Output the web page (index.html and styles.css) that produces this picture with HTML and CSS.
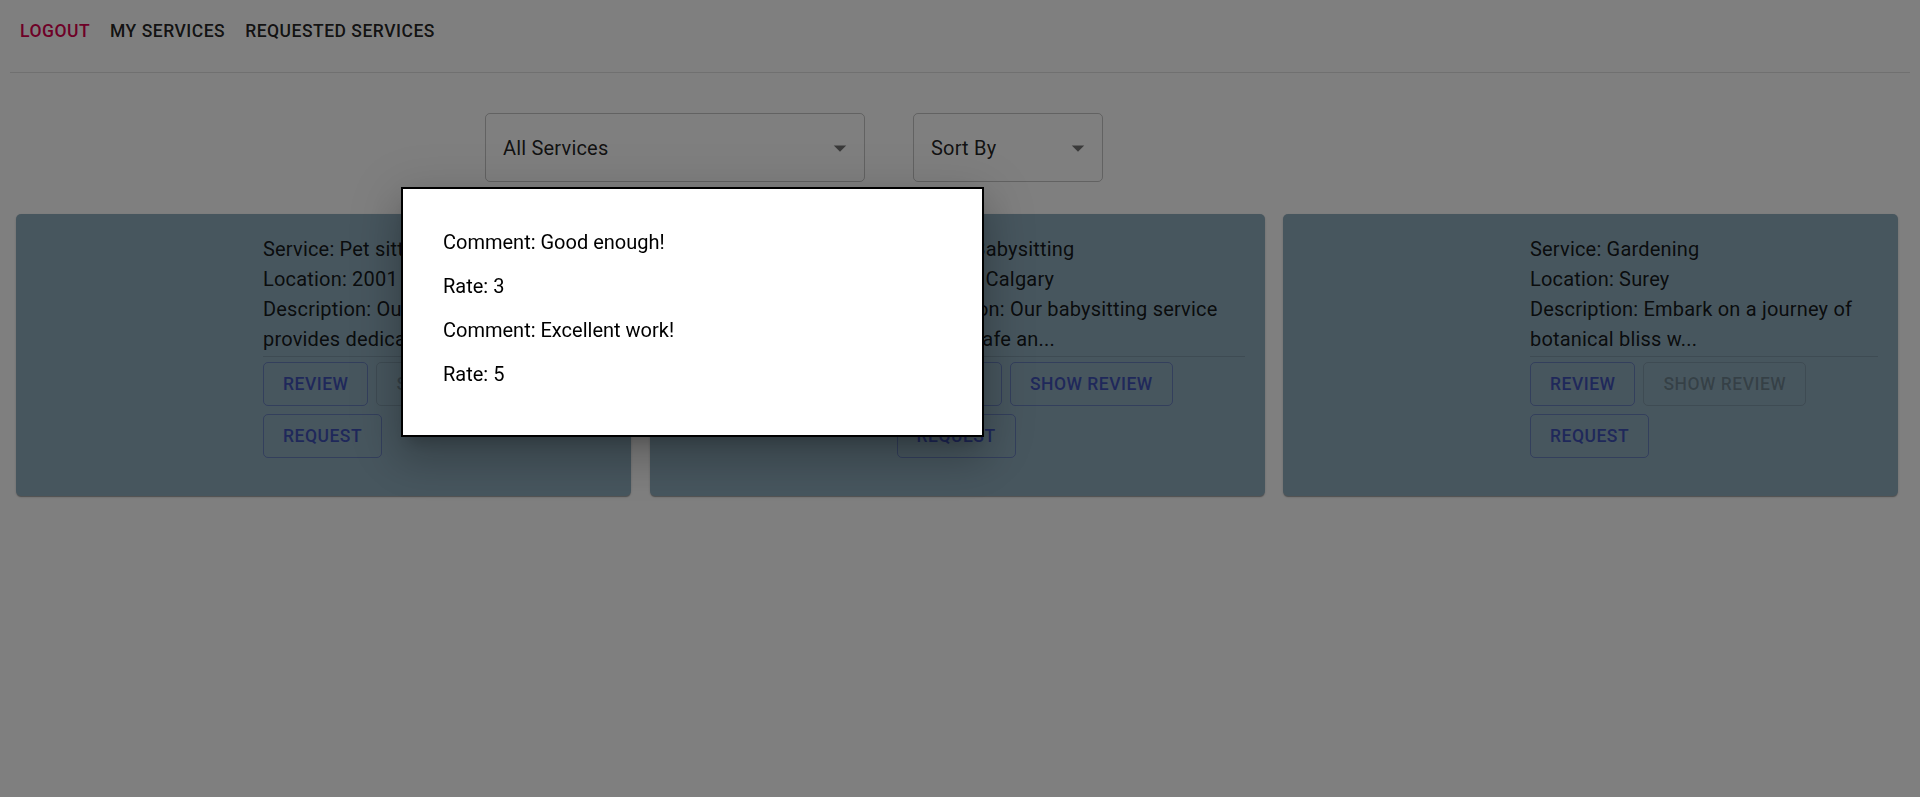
FILE: index.html
```html
<!DOCTYPE html>
<html lang="en">
<head>
<meta charset="utf-8">
<title>Services</title>
<link rel="stylesheet" href="styles.css">
</head>
<body>
  <nav class="topnav">
    <button class="nav-btn nav-btn--logout">Logout</button>
    <button class="nav-btn">My Services</button>
    <button class="nav-btn">Requested Services</button>
  </nav>
  <hr class="divider">

  <div class="filters">
    <div class="select select--wide">
      <span class="select-value">All Services</span>
      <svg class="select-arrow" viewBox="0 0 24 24"><path d="M7 10l5 5 5-5z"/></svg>
    </div>
    <div class="select select--narrow">
      <span class="select-value">Sort By</span>
      <svg class="select-arrow" viewBox="0 0 24 24"><path d="M7 10l5 5 5-5z"/></svg>
    </div>
  </div>

  <div class="cards">
    <div class="card">
      <div class="card-media"></div>
      <div class="card-content">
        <div class="card-text">
          <p>Service: Pet sitting</p>
          <p>Location: 2001 Main St</p>
          <p>Description: Our pet sitting service provides dedicat...</p>
        </div>
        <hr class="card-divider">
        <div class="card-actions">
          <button class="btn">Review</button>
          <button class="btn btn--disabled">Show Review</button>
          <button class="btn">Request</button>
        </div>
      </div>
    </div>
    <div class="card">
      <div class="card-media"></div>
      <div class="card-content">
        <div class="card-text">
          <p>Service: Babysitting</p>
          <p>Location: Calgary</p>
          <p>Description: Our babysitting service offers a safe an...</p>
        </div>
        <hr class="card-divider">
        <div class="card-actions">
          <button class="btn">Review</button>
          <button class="btn">Show Review</button>
          <button class="btn">Request</button>
        </div>
      </div>
    </div>
    <div class="card">
      <div class="card-media"></div>
      <div class="card-content">
        <div class="card-text">
          <p>Service: Gardening</p>
          <p>Location: Surey</p>
          <p>Description: Embark on a journey of botanical bliss w...</p>
        </div>
        <hr class="card-divider">
        <div class="card-actions">
          <button class="btn">Review</button>
          <button class="btn btn--disabled">Show Review</button>
          <button class="btn">Request</button>
        </div>
      </div>
    </div>
  </div>

  <div class="backdrop"></div>
  <div class="modal">
    <p>Comment: Good enough!</p>
    <p>Rate: 3</p>
    <p>Comment: Excellent work!</p>
    <p>Rate: 5</p>
  </div>
</body>
</html>
```

FILE: styles.css
```css
* { box-sizing: border-box; }

html, body {
  height: 100%;
}

body {
  margin: 10px;
  background: #ffffff;
  font-family: Roboto, "Liberation Sans", Arial, sans-serif;
  color: rgba(0, 0, 0, 0.87);
  overflow: hidden;
}

.topnav {
  display: flex;
  align-items: center;
  height: 42px;
}

.nav-btn {
  border: 0;
  background: transparent;
  font-family: Roboto, "Liberation Sans", Arial, sans-serif;
  font-weight: 500;
  font-size: 17.5px;
  letter-spacing: 0.5px;
  text-transform: uppercase;
  color: rgba(0, 0, 0, 0.87);
  padding: 0 10px;
  height: 42px;
  cursor: pointer;
}

.nav-btn--logout {
  color: #dc004e;
}

.divider {
  border: 0;
  height: 1px;
  margin: 20px 0 0;
  background: #e0e0e0;
}

.filters {
  display: flex;
  gap: 48px;
  margin-top: 40px;
  padding-left: 475px;
}

.select {
  position: relative;
  height: 69px;
  border: 1px solid rgba(0, 0, 0, 0.23);
  border-radius: 5px;
  display: flex;
  align-items: center;
  padding: 0 17px;
  font-size: 20px;
  letter-spacing: 0.19px;
  color: rgba(0, 0, 0, 0.87);
}

.select--wide { width: 380px; }
.select--narrow { width: 190px; }

.select-arrow {
  position: absolute;
  right: 9px;
  top: 50%;
  width: 30px;
  height: 30px;
  margin-top: -15px;
  fill: rgba(0, 0, 0, 0.54);
}

.cards {
  display: grid;
  grid-template-columns: repeat(3, 615px);
  column-gap: 18.5px;
  margin-top: 32px;
  padding-left: 6px;
}

.card {
  display: flex;
  background: #8facbd;
  border-radius: 5px;
  box-shadow: 0 2px 1px -1px rgba(0,0,0,0.2), 0 1px 1px 0 rgba(0,0,0,0.14), 0 1px 3px 0 rgba(0,0,0,0.12);
  height: 282px;
}

.card-media {
  width: 227px;
  flex: none;
}

.card-content {
  flex: 1;
  padding: 20px 20px 38px;
}

.card-text p {
  margin: 0;
  font-size: 20px;
  line-height: 30px;
  letter-spacing: 0.19px;
}

.card-divider {
  border: 0;
  height: 1px;
  margin: 2px 0 0;
  background: rgba(0, 0, 0, 0.12);
}

.card-actions {
  display: flex;
  flex-wrap: wrap;
  gap: 8px;
  margin-top: 5px;
}

.btn {
  height: 44px;
  padding: 0 19px;
  border: 1px solid rgba(63, 81, 181, 0.5);
  border-radius: 5px;
  background: transparent;
  color: #3f51b5;
  font-family: Roboto, "Liberation Sans", Arial, sans-serif;
  font-weight: 500;
  font-size: 17.5px;
  letter-spacing: 0.5px;
  text-transform: uppercase;
  cursor: pointer;
}

.btn--disabled {
  color: rgba(0, 0, 0, 0.26);
  border-color: rgba(0, 0, 0, 0.12);
}

.backdrop {
  position: fixed;
  inset: 0;
  background: rgba(0, 0, 0, 0.5);
}

.modal {
  position: fixed;
  left: 401px;
  top: 187px;
  width: 583px;
  background: #ffffff;
  border: 2.5px solid #000000;
  box-shadow: 0 11px 15px -7px rgba(0,0,0,0.2), 0 24px 38px 3px rgba(0,0,0,0.14), 0 9px 46px 8px rgba(0,0,0,0.12);
  padding: 41px 40px 49px;
  display: flex;
  flex-direction: column;
  gap: 20px;
}

.modal p {
  margin: 0;
  font-size: 20px;
  line-height: 24px;
  color: #000000;
}
```
